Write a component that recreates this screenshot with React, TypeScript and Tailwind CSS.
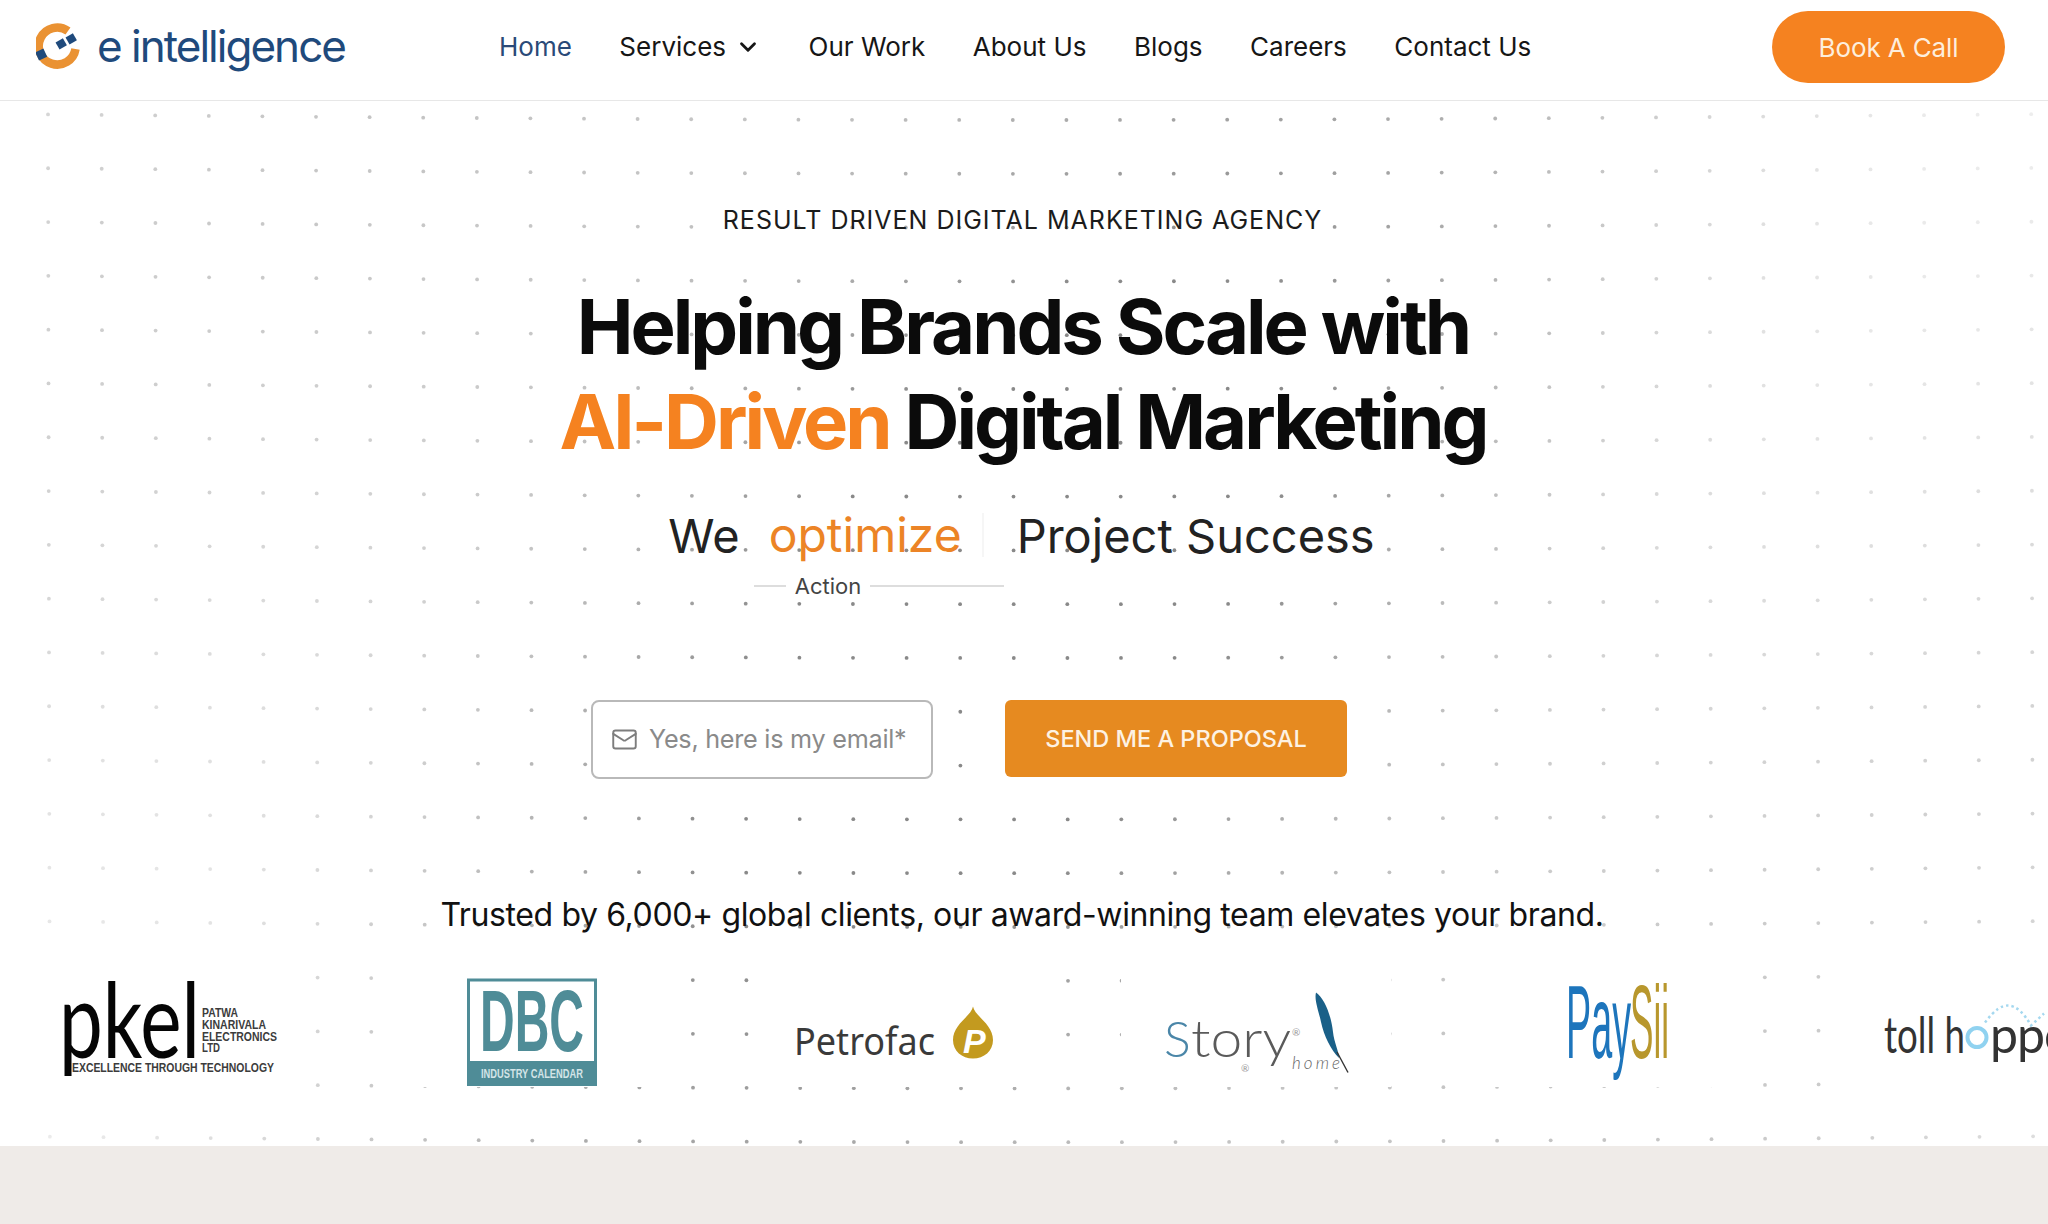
import { ChevronDown, Mail } from "lucide-react";

const sans = "font-['Inter','Liberation_Sans',sans-serif]";

function Dots() {
  const dots: { x: number; y: number; o: number }[] = [];
  for (let r = 0; r < 20; r++) {
    for (let c = 0; c < 39; c++) {
      const x = 48 + c * 53.6 + r * 0.1;
      const y = 114 + r * 53.8 + 6 * Math.sin((x / 2048) * Math.PI);
      const cx = (x - 1000) / 620;
      const cy = (y - 620) / 560;
      const center = Math.exp(-(cx * cx + cy * cy * 0.5));
      const wave = 0.5 + 0.5 * Math.sin(x / 190 + y / 240);
      const o = 0.1 + 0.52 * center + 0.2 * wave * center + 0.16 * wave;
      dots.push({ x, y, o: Math.min(o, 0.8) });
    }
  }
  return (
    <svg className="absolute inset-0 h-full w-full" width="2048" height="1224" aria-hidden="true">
      {dots.map((d, i) => (
        <circle key={i} cx={d.x} cy={d.y - 101} r="1.9" fill="#6b6b6b" opacity={d.o} />
      ))}
    </svg>
  );
}

function BrandMark() {
  return (
    <svg width="46" height="48" viewBox="0 0 46 48" className="shrink-0">
      <path d="M32 8 A18.5 18.5 0 1 0 39.5 26" fill="none" stroke="#ea9233" strokeWidth="8.5" />
      <g fill="#1f4a7c">
        <rect x="0.5" y="27" width="9" height="9" transform="rotate(-25 5 31)" />
        <rect x="21" y="17" width="8.5" height="8" transform="rotate(-30 25 21)" />
        <rect x="31" y="12" width="8.5" height="8" transform="rotate(-30 35 16)" />
      </g>
    </svg>
  );
}

function PkelLogo() {
  return (
    <svg width="220" height="92" viewBox="0 0 220 92" className="overflow-visible">
      <text x="-1" y="73.5" fontFamily="Lato" fontWeight="400" fontSize="104" textLength="141" lengthAdjust="spacingAndGlyphs" fill="#050505">pkel</text>
      <g fontFamily="Liberation Sans" fontSize="12" fontWeight="700" fill="#3c3c3c">
        <text x="142" y="33" textLength="36" lengthAdjust="spacingAndGlyphs">PATWA</text>
        <text x="142" y="45" textLength="64" lengthAdjust="spacingAndGlyphs">KINARIVALA</text>
        <text x="142" y="57" textLength="75" lengthAdjust="spacingAndGlyphs">ELECTRONICS</text>
        <text x="142" y="68" textLength="18" lengthAdjust="spacingAndGlyphs">LTD</text>
        <text x="12" y="88" textLength="202" lengthAdjust="spacingAndGlyphs">EXCELLENCE THROUGH TECHNOLOGY</text>
      </g>
    </svg>
  );
}

function DbcLogo() {
  return (
    <svg width="130" height="112" viewBox="0 0 130 112">
      <rect x="1.5" y="6" width="127" height="104" fill="#fff" stroke="#4f8c97" strokeWidth="3" />
      <rect x="0" y="87" width="130" height="25" fill="#4f8c97" />
      <text x="13" y="77" fontFamily="Liberation Sans" fontWeight="700" fontSize="87" textLength="104" lengthAdjust="spacingAndGlyphs" fill="#4f8c97">DBC</text>
      <text x="14" y="104" fontFamily="Liberation Sans" fontWeight="700" fontSize="12" textLength="102" lengthAdjust="spacingAndGlyphs" fill="#d3e4e7">INDUSTRY CALENDAR</text>
    </svg>
  );
}

function PetrofacLogo() {
  return (
    <svg width="198" height="72" viewBox="0 0 198 72">
      <text x="-1" y="60.5" fontFamily="Noto Sans" fontSize="38" textLength="141" lengthAdjust="spacingAndGlyphs" fill="#3a3a3a">Petrofac</text>
      <path d="M178 12.5 C179.5 22 198 30 198 46 C198 57 189 64.5 178 64.5 C167 64.5 158 57 158 46 C158 30 176.5 22 178 12.5 Z" fill="#c39a1f" />
      <text x="168" y="59" fontFamily="Liberation Sans" fontSize="34" fontWeight="700" fontStyle="italic" fill="#fff">P</text>
    </svg>
  );
}

function StoryLogo() {
  return (
    <svg width="190" height="112" viewBox="0 0 190 112">
      <text x="3" y="82.5" fontFamily="Lato" fontWeight="300" fontSize="50" fill="#4a86a8">S</text>
      <text x="30" y="82.5" fontFamily="Lato" fontWeight="300" fontSize="52" textLength="100" lengthAdjust="spacingAndGlyphs" fill="#5a5a5a">tory</text>
      <text x="131" y="62" fontFamily="Lato" fontSize="10" fill="#999">®</text>
      <text x="80" y="98" fontFamily="Lato" fontSize="10" fill="#999">®</text>
      <text x="131" y="95" fontFamily="Lato" fontWeight="300" fontStyle="italic" fontSize="17" textLength="48" fill="#666">home</text>
      <path d="M155 18.5 C163 24 170 40 172 58 C173 68 178 78 178 84 C170 76 163 62 160 48 C158 38 153 26 155 18.5 Z" fill="#1a6088" />
      <path d="M176 78 L187 98.5" stroke="#333" strokeWidth="1.4" fill="none" />
    </svg>
  );
}

function PaySiiLogo() {
  return (
    <svg width="108" height="104" viewBox="0 0 108 104">
      <text x="2" y="79.5" fontFamily="Liberation Sans" fontSize="103" textLength="65" lengthAdjust="spacingAndGlyphs" fill="#1d75bc">Pay</text>
      <text x="66" y="79.5" fontFamily="Liberation Sans" fontSize="103" textLength="39" lengthAdjust="spacingAndGlyphs" fill="#b8972d">Sii</text>
    </svg>
  );
}

function TollLogo() {
  return (
    <svg width="240" height="90" viewBox="0 0 240 90">
      <path d="M125 37.5 C135 24 142 20.5 148 20.5 C156 20.5 164 28 171 40.5 L184 28.5" fill="none" stroke="#a5d8ef" strokeWidth="2.5" strokeDasharray="2.5 3" />
      <text x="24" y="67.5" fontFamily="Lato" fontWeight="400" fontSize="50" textLength="81" lengthAdjust="spacingAndGlyphs" fill="#333">toll h</text>
      <circle cx="117" cy="52.5" r="9.5" fill="none" stroke="#90d2f0" strokeWidth="4" />
      <text x="130" y="67.5" fontFamily="Lato" fontWeight="400" fontSize="50" letterSpacing="-1" fill="#333">pper</text>
    </svg>
  );
}

export default function App() {
  const logos = [<PkelLogo />, <DbcLogo />, <PetrofacLogo />, <StoryLogo />, <PaySiiLogo />, <TollLogo />];
  return (
    <div className={`flex h-[1224px] w-[2048px] flex-col overflow-hidden bg-white ${sans}`}>
      <header className="flex h-[101px] shrink-0 items-center border-b border-[#e7e7e7] pb-[6px] pl-[36px] pr-[43px]">
        <div className="flex w-[463px] shrink-0 items-center gap-[15px]">
          <BrandMark />
          <span className="-mt-[2px] text-[44px] leading-none font-normal tracking-[-0.045em] text-[#1f4a7c]">e intelligence</span>
        </div>
        <nav className="flex items-center gap-[47.5px] text-[26px] leading-none text-[#161616]">
          <a className="text-[#2a4a78]">Home</a>
          <a className="flex items-center gap-[9px]">Services <ChevronDown size={26} strokeWidth={2.6} /></a>
          <a>Our Work</a>
          <a>About Us</a>
          <a>Blogs</a>
          <a>Careers</a>
          <a>Contact Us</a>
        </nav>
        <a className="ml-auto flex h-[72px] w-[233px] items-center justify-center rounded-full bg-[#f58220] text-[26px] tracking-[-0.005em] text-[#fdeedd]">Book A Call</a>
      </header>

      <main className="relative flex h-[1045px] shrink-0 flex-col items-center overflow-hidden">
        <Dots />
        <div className="relative flex w-full flex-col items-center">
          <p className="mt-[102px] mr-[3px] text-[25px] leading-[34px] tracking-[0.04em] text-[#1b1b1b]">RESULT DRIVEN DIGITAL MARKETING AGENCY</p>
          <h1 className="mt-[42px] mr-[2px] text-center text-[76px] leading-[95px] font-bold tracking-[-0.04em] text-[#0b0b0b]">
            Helping Brands Scale with<br />
            <span className="text-[#f58220]">AI-Driven</span> Digital Marketing
          </h1>
          <div className="mt-[31px] mr-[5px] flex h-[70px] items-center text-[47px] leading-none text-[#222]">
            <span>We</span>
            <span className="ml-[29px] h-[44px] w-[215px] whitespace-nowrap border-r-2 border-[#f6f6f6] text-[48px] leading-[44px] text-[#ec8426]">optimize</span>
            <span className="ml-[33px]">Project Success</span>
          </div>
          <div className="mt-px mr-[290px] flex items-center gap-[9px] text-[22px] leading-[30px] text-[#444]">
            <span className="h-[2px] w-[32px] bg-[#dddddd]" />
            <span>Action</span>
            <span className="h-[2px] w-[134px] bg-[#dddddd]" />
          </div>
          <form className="mt-[99px] mr-[110px] flex items-start gap-[72px]">
            <div className="flex h-[79px] w-[342px] items-center gap-[11px] rounded-[8px] border-2 border-[#b9b9b9] bg-white pl-[18px]">
              <Mail size={27} strokeWidth={1.7} className="shrink-0 text-[#7d7d7d]" />
              <span className="text-[25.2px] leading-none whitespace-nowrap tracking-[-0.01em] text-[#8a8a8a]">Yes, here is my email*</span>
            </div>
            <button type="button" className="flex h-[77px] w-[342px] items-center justify-center rounded-[6px] bg-[#e68a20] text-[23.5px] font-medium whitespace-nowrap text-[#fdf2e3]">SEND ME A PROPOSAL</button>
          </form>
          <p className="mt-[115px] mr-[4px] text-[32px] leading-[42px] tracking-[-0.012em] text-[#111]">Trusted by 6,000+ global clients, our award-winning team elevates your brand.</p>
          <div className="mt-[36px] flex w-full -translate-x-[11px] items-center">
            {logos.map((logo, i) => (
              <div key={i} className="flex w-[362px] shrink-0 justify-center">
                <div className="flex h-[115px] w-[270px] shrink-0 items-center justify-center bg-white">{logo}</div>
              </div>
            ))}
          </div>
        </div>
      </main>
      <div className="flex-1 bg-[#efebe8]" />
    </div>
  );
}
